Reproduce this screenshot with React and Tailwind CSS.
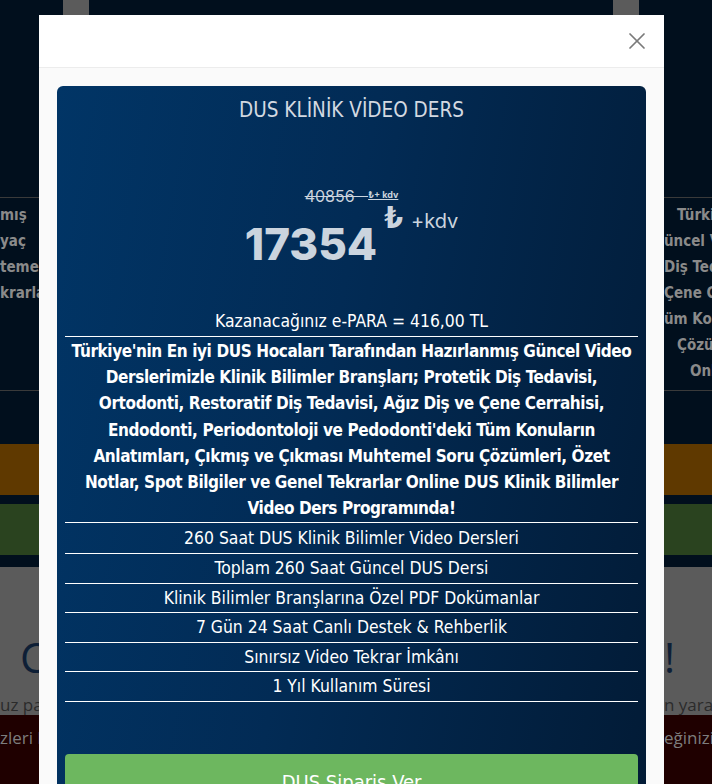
import { X } from "lucide-react";

const cond = "font-['DejaVu_Sans_Condensed','Liberation_Sans',sans-serif]";

const bgRows = [
  { left: "mış", right: "Türkiye", pad: "pl-[13px]" },
  { left: "yaç", right: "üncel Video", pad: "pl-0" },
  { left: "temel", right: "Diş Tedavisi", pad: "pl-0" },
  { left: "krarlar", right: "Çene Cerrahisi", pad: "pl-0" },
  { left: "", right: "üm Konuların", pad: "pl-0" },
  { left: "", right: "Çözümleri", pad: "pl-[13px]" },
  { left: "", right: "Online", pad: "pl-[26px]" },
];

const features = [
  "260 Saat DUS Klinik Bilimler Video Dersleri",
  "Toplam 260 Saat Güncel DUS Dersi",
  "Klinik Bilimler Branşlarına Özel PDF Dokümanlar",
  "7 Gün 24 Saat Canlı Destek & Rehberlik",
  "Sınırsız Video Tekrar İmkânı",
  "1 Yıl Kullanım Süresi",
];

const intro = [
  "Türkiye'nin En iyi DUS Hocaları Tarafından Hazırlanmış Güncel Video",
  "Derslerimizle Klinik Bilimler Branşları; Protetik Diş Tedavisi,",
  "Ortodonti, Restoratif Diş Tedavisi, Ağız Diş ve Çene Cerrahisi,",
  "Endodonti, Periodontoloji ve Pedodonti'deki Tüm Konuların",
  "Anlatımları, Çıkmış ve Çıkması Muhtemel Soru Çözümleri, Özet",
  "Notlar, Spot Bilgiler ve Genel Tekrarlar Online DUS Klinik Bilimler",
  "Video Ders Programında!",
];

const Backdrop = () => (
  <div className="h-[784px] overflow-hidden bg-[#010f1d]">
    {/* top hero strip */}
    <div className="h-[197px] flex justify-between pl-[63px] pr-[73px]">
      <div className="w-[26px] h-[15px] bg-[#5b5b5b]" />
      <div className="w-[26px] h-[15px] bg-[#5b5b5b]" />
    </div>

    {/* bold description behind the modal */}
    <div className={`border-y border-[#3a3a3a] pt-[4px] pb-[6px] ${cond}`}>
      {bgRows.map((r, i) => (
        <div key={i} className="flex justify-between h-[26px] items-center text-[15px] font-bold text-[#8a8a8a]">
          <div className="w-[39px] overflow-hidden whitespace-nowrap">{r.left}</div>
          <div className={`w-[48px] overflow-hidden whitespace-nowrap ${r.pad}`}>{r.right}</div>
        </div>
      ))}
    </div>

    <div className="h-[53px]" />
    <div className="h-[51px] bg-[#5f3900]" />
    <div className="h-[9px]" />
    <div className="h-[51px] bg-[#2a431f]" />
    <div className="h-[12px]" />

    {/* light section */}
    <div className="h-[148px] bg-[#5b5b5b] pt-[66px] font-['Open_Sans',sans-serif]">
      <div className="flex justify-between items-center h-[48px] text-[42px] text-[#0e1f36] leading-none">
        <div className="w-[39px] pl-[20px] overflow-hidden">C</div>
        <div className="w-[48px] overflow-hidden">!</div>
      </div>
      <div className="mt-[14px] flex justify-between items-center h-[20px] text-[17px] text-[#2b2b2b] whitespace-nowrap">
        <div className="w-[39px] overflow-hidden">uz pa</div>
        <div className="w-[48px] overflow-hidden">n yara</div>
      </div>
    </div>

    <div className="h-[80px] bg-[#1f0000] pt-[11px] font-['Open_Sans',sans-serif]">
      <div className="flex justify-between items-center h-[24px] text-[17px] text-[#7d7d7d] whitespace-nowrap">
        <div className="w-[39px] overflow-hidden">zleri l</div>
        <div className="w-[48px] overflow-hidden">eğinizi</div>
      </div>
    </div>
  </div>
);

const PriceCard = () => (
  <div className={`rounded-[6px] bg-[linear-gradient(100deg,#013566_0%,#022b55_45%,#021b36_100%)] px-[8px] pt-[12px] text-center text-white ${cond}`}>
    <div className="text-[20.5px] leading-[24px] text-[#d3d9e1]">DUS KLİNİK VİDEO DERS</div>

    {/* price */}
    <div className="mt-[64px] flex flex-col items-center font-['Inter',sans-serif] text-[#cbd4de]">
      <div className="text-[16px] leading-[20px] line-through">
        40856 &nbsp;&nbsp;<sup className="text-[9px] font-bold">₺+ kdv</sup>
      </div>
      <div className="flex items-start">
        <span className="mt-[16px] text-[44px] font-extrabold leading-none">17354</span>
        <span className={`ml-[7px] -mt-[3px] text-[30px] font-bold leading-[30px] ${cond}`}>₺</span>
        <span className="ml-[8px] mt-[3px] text-[20px] leading-[24px]">+kdv</span>
      </div>
    </div>

    <div className="mt-[41px]">
      <div className="border-b border-white py-[4px] text-[17.4px] leading-[21px]">
        Kazanacağınız e-PARA = 416,00 TL
      </div>
      <div className="border-b border-white pt-[1px] pb-[1px] text-[17px] tracking-[-0.4px] font-bold leading-[26.2px] whitespace-nowrap">
        {intro.map((l, i) => (
          <div key={i}>{l}</div>
        ))}
      </div>
      {features.map((f, i) => (
        <div
          key={f}
          className={`border-b border-white ${i === 0 ? "pt-[5px] pb-[4px]" : "py-[4px]"} text-[17.4px] leading-[20.6px]`}
        >
          {f}
        </div>
      ))}
    </div>

    <button className="mt-[52px] w-full h-[56px] rounded-[4px] bg-[#6db75f] text-[20px] text-white">
      DUS Siparis Ver
    </button>
  </div>
);

export default function App() {
  return (
    <div className="relative h-[784px] overflow-hidden">
      <Backdrop />

      {/* modal */}
      <div className="absolute left-[39px] top-[15px] w-[625px] h-[769px] bg-[#fafafa] overflow-hidden">
        <div className="h-[53px] bg-white border-b border-[#ececec] flex items-center justify-end pr-[13px]">
          <X size={28} strokeWidth={1.5} className="text-[#7a7a7a]" />
        </div>
        <div className="px-[18px] pt-[18px]">
          <PriceCard />
        </div>
      </div>
    </div>
  );
}
